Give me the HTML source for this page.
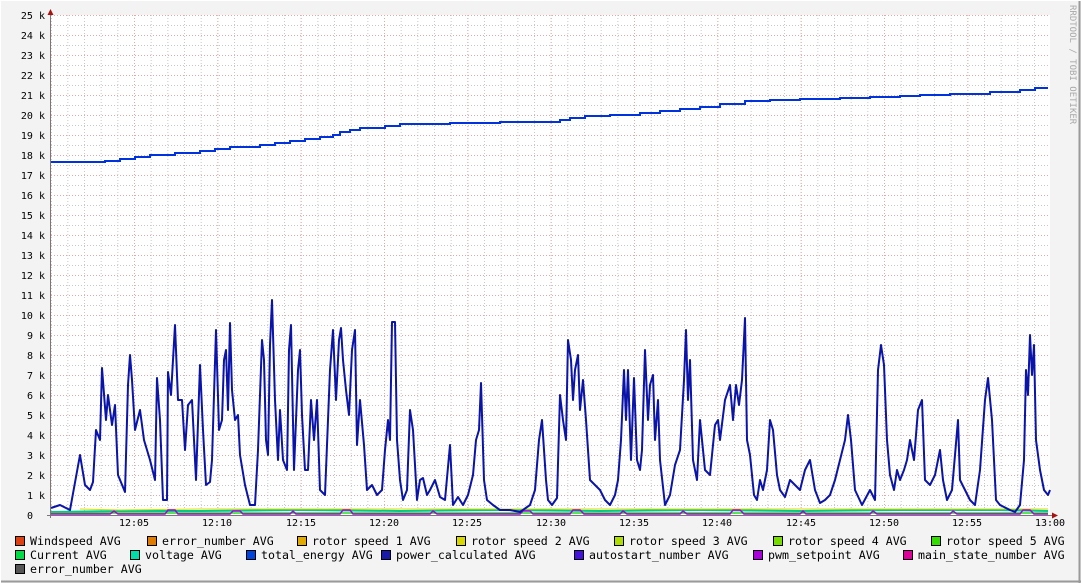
<!DOCTYPE html>
<html><head><meta charset="utf-8"><style>
html,body{margin:0;padding:0;background:#f3f3f3;}
svg{display:block;}
.ax{font-family:"DejaVu Sans Mono","Liberation Mono",monospace;font-size:10px;fill:#000;}
.lg{font-family:"DejaVu Sans Mono","Liberation Mono",monospace;font-size:11.6px;fill:#000;}
</style></head><body>
<svg width="1081" height="583" viewBox="0 0 1081 583" xmlns="http://www.w3.org/2000/svg">
<defs>
<pattern id="mh" x="0" y="15" width="1081" height="10" patternUnits="userSpaceOnUse"><line x1="0" y1="0.5" x2="1081" y2="0.5" stroke="#c8c8c8" stroke-dasharray="1,2"/></pattern>
<pattern id="mv" x="50.67" y="0" width="16.667" height="583" patternUnits="userSpaceOnUse"><line x1="0.5" y1="0" x2="0.5" y2="583" stroke="#c8c8c8" stroke-dasharray="1,2"/></pattern>
<pattern id="Mh" x="0" y="15" width="1081" height="20" patternUnits="userSpaceOnUse"><line x1="0" y1="0.5" x2="1081" y2="0.5" stroke="#e3a8a8" stroke-dasharray="1,2"/></pattern>
<pattern id="Mv" x="50.67" y="0" width="83.333" height="583" patternUnits="userSpaceOnUse"><line x1="0.5" y1="0" x2="0.5" y2="583" stroke="#e3a8a8" stroke-dasharray="1,2"/></pattern>
</defs>
<rect x="0" y="0" width="1081" height="583" fill="#f3f3f3"/>
<line x1="1079.5" y1="0" x2="1079.5" y2="583" stroke="#9a9a9a" stroke-width="2"/>
<line x1="0" y1="581.5" x2="1081" y2="581.5" stroke="#9a9a9a" stroke-width="2"/>
<line x1="0.5" y1="0" x2="0.5" y2="583" stroke="#ffffff"/>
<line x1="0" y1="0.5" x2="1081" y2="0.5" stroke="#ffffff"/>
<rect x="51" y="15" width="999" height="500" fill="#ffffff"/>
<g>
<rect x="51" y="15" width="999" height="500" fill="url(#mh)"/>
<rect x="51" y="15" width="999" height="500" fill="url(#mv)"/>
<rect x="51" y="15" width="999" height="500" fill="url(#Mh)"/>
<rect x="51" y="15" width="999" height="500" fill="url(#Mv)"/>
</g>
<g class="ax" text-anchor="end">
<text x="45" y="19">25 k</text><text x="45" y="39">24 k</text><text x="45" y="59">23 k</text><text x="45" y="79">22 k</text><text x="45" y="99">21 k</text>
<text x="45" y="119">20 k</text><text x="45" y="139">19 k</text><text x="45" y="159">18 k</text><text x="45" y="179">17 k</text><text x="45" y="199">16 k</text>
<text x="45" y="219">15 k</text><text x="45" y="239">14 k</text><text x="45" y="259">13 k</text><text x="45" y="279">12 k</text><text x="45" y="299">11 k</text>
<text x="45" y="319">10 k</text><text x="45" y="339">9 k</text><text x="45" y="359">8 k</text><text x="45" y="379">7 k</text><text x="45" y="399">6 k</text>
<text x="45" y="419">5 k</text><text x="45" y="439">4 k</text><text x="45" y="459">3 k</text><text x="45" y="479">2 k</text><text x="45" y="499">1 k</text>
<text x="33" y="519">0</text>
</g>
<g class="ax" text-anchor="middle">
<text x="134" y="526">12:05</text><text x="217" y="526">12:10</text><text x="301" y="526">12:15</text><text x="384" y="526">12:20</text>
<text x="467" y="526">12:25</text><text x="551" y="526">12:30</text><text x="634" y="526">12:35</text><text x="717" y="526">12:40</text>
<text x="801" y="526">12:45</text><text x="884" y="526">12:50</text><text x="967" y="526">12:55</text><text x="1050" y="526">13:00</text>
</g>
<polyline fill="none" stroke="#00cc88" stroke-width="2" points="51,512 120,511 200,511 300,510 400,511 500,510 600,511 700,510 800,511 900,510 1000,510 1048,511"/>
<polyline fill="none" stroke="#22dd22" stroke-width="1.5" points="51,513 1048,513"/>
<polyline fill="none" stroke="#dddd00" stroke-width="1" points="80,509 120,510 200,509 300,509 400,509 500,509 600,509 700,509 800,509 900,509 1048,509"/>
<polyline fill="none" stroke="#aa00dd" stroke-width="1.5" points="51,514 110,514 114,511 118,514 165,514 168,510 175,510 178,514 230,514 233,511 240,511 243,514 290,514 293,511 296,514 340,514 343,510 350,510 353,514 430,514 433,511 437,514 520,514 523,511 530,511 533,514 570,514 573,510 580,510 584,514 620,514 623,511 627,514 680,514 683,511 687,514 730,514 733,510 740,510 744,514 800,514 803,511 806,514 870,514 873,511 877,514 950,514 953,511 957,514 1020,514 1023,510 1030,510 1034,514 1048,514"/>
<polyline fill="none" stroke="#0033dd" stroke-width="2" points="51,162 105,162 105,161 120,161 120,159 135,159 135,157 150,157 150,155 175,155 175,153 200,153 200,151 215,151 215,149 230,149 230,147 260,147 260,145 275,145 275,143 290,143 290,141 305,141 305,139 320,139 320,137 333,137 333,135 340,135 340,132 350,132 350,130 360,130 360,128 385,128 385,126 400,126 400,124 450,124 450,123 500,123 500,122 560,122 560,120 570,120 570,118 585,118 585,116 610,116 610,115 640,115 640,113 660,113 660,111 680,111 680,109 700,109 700,107 720,107 720,104 745,104 745,101 770,101 770,100 800,100 800,99 840,99 840,98 870,98 870,97 900,97 900,96 920,96 920,95 950,95 950,94 990,94 990,92 1020,92 1020,90 1035,90 1035,88 1048,88"/>
<polyline fill="none" stroke="#0a14a8" stroke-width="2" stroke-linejoin="round" points="51,508 60,505 70,510 80,455 85,485 90,490 93,482 96,430 100,440 102,368 106,420 108,395 112,425 115,405 118,475 125,492 128,385 130,355 132,380 135,430 140,410 144,440 150,460 155,480 157,378 160,420 163,500 167,500 168,372 171,395 175,325 178,400 182,400 185,450 188,405 192,400 196,480 200,365 203,430 206,485 210,482 212,460 216,330 219,430 222,420 224,360 226,350 228,410 230,323 232,390 235,420 238,415 240,455 245,485 250,505 255,505 258,450 262,340 264,360 266,440 268,455 270,345 272,300 275,400 278,460 280,410 283,460 287,470 289,350 291,325 294,470 296,420 298,370 300,350 302,415 305,470 308,470 311,400 314,440 317,400 320,490 325,495 330,370 333,330 336,400 339,340 341,328 343,360 346,390 349,415 352,350 355,330 357,445 360,400 364,445 367,490 372,485 377,495 382,490 385,450 388,420 390,440 392,322 395,322 397,440 400,480 403,500 407,490 410,410 413,430 417,500 420,480 423,478 427,495 430,490 435,480 440,497 445,500 450,445 453,505 458,497 463,505 468,495 473,475 476,440 479,430 481,383 484,480 487,500 493,505 500,510 510,510 520,512 530,505 535,490 539,440 542,420 546,480 548,500 552,505 557,498 560,395 563,420 566,440 568,340 571,360 573,400 575,370 578,355 580,410 583,380 586,420 590,480 595,485 600,490 605,500 610,505 615,495 618,480 621,440 624,370 626,420 628,370 631,460 634,378 637,460 640,470 642,450 645,350 648,420 650,385 653,375 655,440 658,400 660,460 665,505 670,495 675,465 680,450 684,380 686,330 688,400 690,360 693,460 697,480 700,420 705,470 710,475 715,425 718,420 720,440 725,400 730,385 733,420 736,385 739,405 742,380 745,318 747,440 750,455 754,495 757,500 760,480 763,490 767,470 770,420 773,430 777,475 780,490 785,497 790,480 795,485 800,490 805,470 810,460 815,490 820,503 825,500 830,495 835,480 840,460 845,440 848,415 851,440 855,490 862,505 870,490 875,500 878,370 881,345 884,365 887,440 890,475 894,490 897,470 900,480 904,470 907,460 910,440 914,460 918,410 922,400 925,480 930,485 935,475 940,450 943,480 947,500 952,490 958,420 960,480 965,490 970,500 975,505 980,470 985,400 988,378 992,420 996,500 1000,505 1010,510 1015,512 1020,505 1024,460 1026,370 1028,395 1030,335 1032,375 1034,345 1036,440 1040,470 1044,490 1048,495 1050,490"/>
<line x1="50.5" y1="10" x2="50.5" y2="518" stroke="#777" stroke-width="1"/>
<line x1="47" y1="515.5" x2="1054" y2="515.5" stroke="#777" stroke-width="1"/>
<polygon points="47.5,15 53.5,15 50.5,9" fill="#a11"/>
<polygon points="1052,512.5 1052,518.5 1058,515.5" fill="#a11"/>
<text x="1070" y="5" transform="rotate(90 1070 5)" font-family="DejaVu Sans Mono,monospace" font-size="9" fill="#a8a8a8">RRDTOOL / TOBI OETIKER</text>
<g stroke="#000" stroke-width="1">
<rect x="15.5" y="536.5" width="9" height="9" fill="#e04010"/>
<rect x="147.5" y="536.5" width="9" height="9" fill="#e07a00"/>
<rect x="297.5" y="536.5" width="9" height="9" fill="#e0aa00"/>
<rect x="456.5" y="536.5" width="9" height="9" fill="#d8d800"/>
<rect x="614.5" y="536.5" width="9" height="9" fill="#b0dd00"/>
<rect x="773.5" y="536.5" width="9" height="9" fill="#77dd00"/>
<rect x="931.5" y="536.5" width="9" height="9" fill="#33dd00"/>
<rect x="15.5" y="550.5" width="9" height="9" fill="#00dd44"/>
<rect x="130.5" y="550.5" width="9" height="9" fill="#00ddaa"/>
<rect x="246.5" y="550.5" width="9" height="9" fill="#0044dd"/>
<rect x="381.5" y="550.5" width="9" height="9" fill="#1a1aa8"/>
<rect x="574.5" y="550.5" width="9" height="9" fill="#4411dd"/>
<rect x="753.5" y="550.5" width="9" height="9" fill="#aa00dd"/>
<rect x="903.5" y="550.5" width="9" height="9" fill="#dd0099"/>
<rect x="15.5" y="564.5" width="9" height="9" fill="#555555"/>
</g>
<g class="lg">
<text x="30" y="545">Windspeed AVG</text>
<text x="162" y="545">error_number AVG</text>
<text x="312" y="545">rotor speed 1 AVG</text>
<text x="471" y="545">rotor speed 2 AVG</text>
<text x="629" y="545">rotor speed 3 AVG</text>
<text x="788" y="545">rotor speed 4 AVG</text>
<text x="946" y="545">rotor speed 5 AVG</text>
<text x="30" y="559">Current AVG</text>
<text x="145" y="559">voltage AVG</text>
<text x="261" y="559">total_energy AVG</text>
<text x="396" y="559">power_calculated AVG</text>
<text x="589" y="559">autostart_number AVG</text>
<text x="768" y="559">pwm_setpoint AVG</text>
<text x="918" y="559">main_state_number AVG</text>
<text x="30" y="573">error_number AVG</text>
</g>
</svg>
</body></html>
